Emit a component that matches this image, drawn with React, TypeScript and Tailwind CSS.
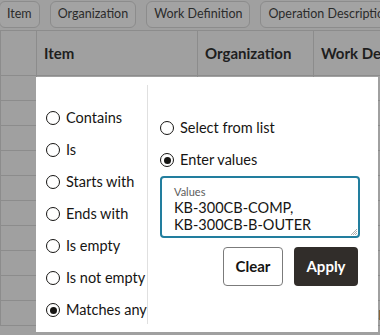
import React from "react";

const font = { fontFamily: 'Lato, "Noto Sans", sans-serif' };

function Radio({ checked }: { checked?: boolean }) {
  return (
    <span className="w-[14px] h-[14px] rounded-full border-[1.5px] border-[#161513] flex items-center justify-center shrink-0 bg-white">
      {checked && <span className="w-[7px] h-[7px] rounded-full bg-[#161513]" />}
    </span>
  );
}

function Opt({ label, checked }: { label: string; checked?: boolean }) {
  return (
    <div className="flex items-center gap-[6px] h-[32px] text-[14.5px] text-[#161513] whitespace-nowrap">
      <Radio checked={checked} />
      <span>{label}</span>
    </div>
  );
}

export default function App() {
  const rows = Array.from({ length: 10 });
  return (
    <div className="relative w-[380px] h-[335px] overflow-hidden bg-[#a0a0a0]" style={font}>
      <div className="flex gap-[10px] h-[30px] pt-[1px] text-[12.5px] text-[#2b2b2b]">
        {["Item", "Organization", "Work Definition", "Operation Description"].map((c, i) => (
          <div
            key={c}
            className={`h-[27px] flex items-center px-[7px] border border-[#8c8c8c] rounded-[6px] bg-[#a3a3a3] whitespace-nowrap shrink-0 ${i === 0 ? "-ml-[1px]" : ""}`}
          >
            {c}
          </div>
        ))}
      </div>
      <div className="flex h-[46px] border-t border-b border-[#8c8c8c] text-[15px] font-bold text-[#1e1e1e]">
        <div className="w-[37px] shrink-0 border-l border-r border-[#8c8c8c]" />
        <div className="w-[161px] shrink-0 border-r border-[#8c8c8c] flex items-center pl-[7px]">Item</div>
        <div className="w-[116px] shrink-0 border-r border-[#8c8c8c] flex items-center pl-[7px]">Organization</div>
        <div className="flex-1 flex items-center pl-[7px] whitespace-nowrap">Work Definition</div>
      </div>
      {rows.map((_, i) => (
        <div key={i} className="flex h-[25px] border-b border-[#8c8c8c] text-[14px] text-[#1e1e1e]">
          <div className="w-[37px] shrink-0 border-l border-r border-[#8c8c8c]" />
          <div className="w-[161px] shrink-0 border-r border-[#8c8c8c] pl-[7px] pt-[3px] whitespace-nowrap">
            {i === 9 ? "KB-300CB-COMP" : ""}
          </div>
          <div className="w-[116px] shrink-0 border-r border-[#8c8c8c] pl-[7px] pt-[3px]">{i === 9 ? "M1" : ""}</div>
          <div className="flex-1 pl-[7px] pt-[3px] whitespace-nowrap">{i === 9 ? "KB-300CB" : ""}</div>
        </div>
      ))}

      <div className="absolute left-[36px] top-[77px] w-[342px] h-[255px] bg-white flex">
        <div className="w-[112px] shrink-0 border-r border-[#e0e0e0] my-[8px] pl-[10px] pt-[17px]">
          <Opt label="Contains" />
          <Opt label="Is" />
          <Opt label="Starts with" />
          <Opt label="Ends with" />
          <Opt label="Is empty" />
          <Opt label="Is not empty" />
          <Opt label="Matches any" checked />
        </div>
        <div className="flex-1 pl-[12px] pr-[18px] pt-[35px]">
          <Opt label="Select from list" />
          <Opt label="Enter values" checked />
          <div className="relative h-[62px] border-2 border-[#227e9e] rounded-[4px] pl-[12px] pt-[7px]">
            <div className="text-[11px] leading-[13px] text-[#5c5c5c]">Values</div>
            <div className="text-[14.5px] leading-[17px] text-[#161513] mt-[1px] whitespace-nowrap">
              KB-300CB-COMP,
              <br />
              KB-300CB-B-OUTER
            </div>
            <svg className="absolute right-[1px] bottom-[1px]" width="6" height="6" viewBox="0 0 6 6">
              <path d="M6 0 L0 6 M6 2 L2 6 M6 4 L4 6" stroke="#999" strokeWidth="0.8" />
            </svg>
          </div>
          <div className="flex justify-end gap-[11px] mt-[9px] pr-[2px]">
            <button className="w-[60px] h-[39px] border border-[#7b7b7b] rounded-[4px] bg-white text-[15px] font-bold text-[#161513]">
              Clear
            </button>
            <button className="w-[64px] h-[39px] rounded-[4px] bg-[#312d2a] text-[15px] font-bold text-white">
              Apply
            </button>
          </div>
        </div>
      </div>
    </div>
  );
}
